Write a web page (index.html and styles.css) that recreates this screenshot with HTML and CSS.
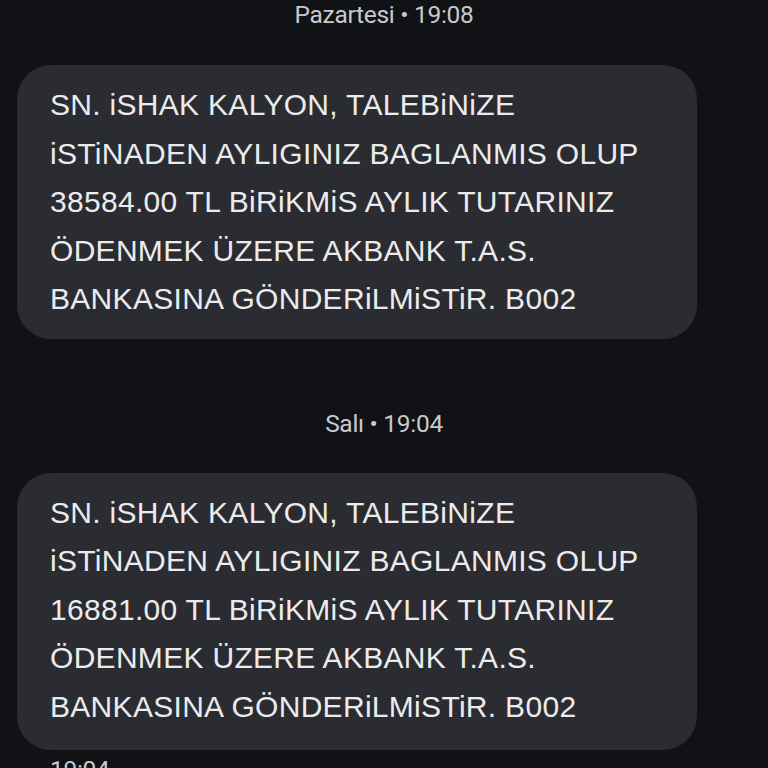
FILE: index.html
```html
<!DOCTYPE html>
<html lang="tr">
<head>
<meta charset="utf-8">
<link rel="stylesheet" href="styles.css">
</head>
<body>
<div class="thread">
  <div class="stamp stamp-first">Pazartesi • 19:08</div>
  <div class="bubble">SN. iSHAK KALYON, TALEBiNiZE<br>iSTiNADEN AYLIGINIZ BAGLANMIS OLUP<br>38584.00 TL BiRiKMiS AYLIK TUTARINIZ<br>ÖDENMEK ÜZERE AKBANK T.A.S.<br>BANKASINA GÖNDERiLMiSTiR. B002</div>
  <div class="stamp stamp-mid">Salı • 19:04</div>
  <div class="bubble bubble-last">SN. iSHAK KALYON, TALEBiNiZE<br>iSTiNADEN AYLIGINIZ BAGLANMIS OLUP<br>16881.00 TL BiRiKMiS AYLIK TUTARINIZ<br>ÖDENMEK ÜZERE AKBANK T.A.S.<br>BANKASINA GÖNDERiLMiSTiR. B002</div>
  <div class="time">19:04</div>
</div>
</body>
</html>
```
FILE: styles.css
```css
html, body {
  margin: 0;
  padding: 0;
  background: #111216;
  height: 768px;
  overflow: hidden;
}
.thread {
  display: flex;
  flex-direction: column;
}
.stamp {
  font-family: Roboto, "Liberation Sans", sans-serif;
  font-size: 24.5px;
  line-height: 30px;
  color: #c9c9cd;
  text-align: center;
  letter-spacing: -0.3px;
}
.stamp-first {
  margin-top: 0;
  margin-bottom: 35px;
}
.stamp-mid {
  margin-top: 70px;
  margin-bottom: 34px;
}
.bubble {
  margin: 0 71px 0 17px;
  padding: 16px 20px 15px 33px;
  background: #2b2c31;
  border-radius: 34px;
  font-family: "Liberation Sans", Arial, sans-serif;
  font-size: 30px;
  line-height: 48.5px;
  letter-spacing: 0.3px;
  color: #ebebed;
  white-space: nowrap;
}
.bubble-last {
  padding-bottom: 19px;
}
.time {
  margin: 5px 0 0 50px;
  font-family: Roboto, "Liberation Sans", sans-serif;
  font-size: 24.5px;
  line-height: 30px;
  letter-spacing: -0.3px;
  color: #c9c9cd;
}
```
